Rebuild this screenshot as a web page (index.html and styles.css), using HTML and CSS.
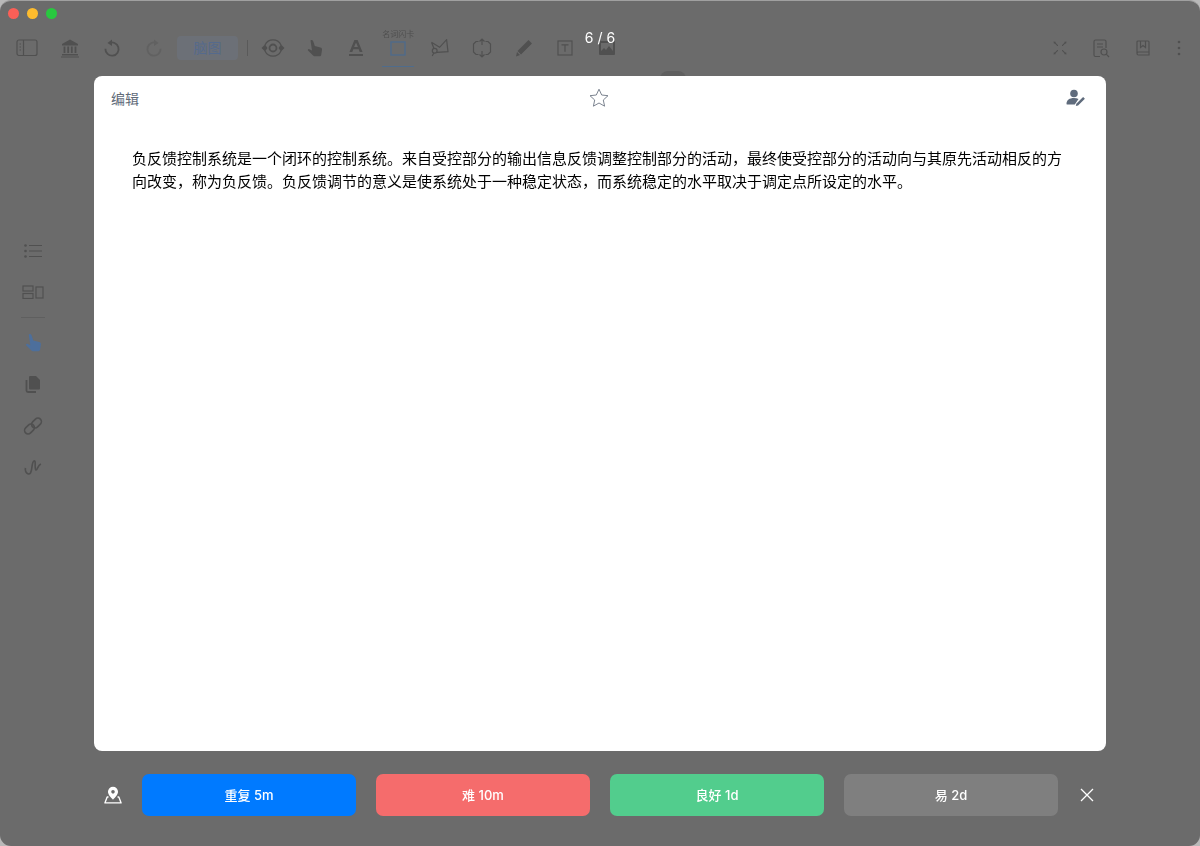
FILE: index.html
```html
<!DOCTYPE html>
<html>
  <head>
    <title>闪卡复习</title>
    <link rel="stylesheet" href="styles.css">
  </head>
  <body>
    <div class="window">
      <div class="titlebar">
        <span class="light red"></span>
        <span class="light yellow"></span>
        <span class="light green"></span>
      </div>

      <div class="toolbar">
        <div class="tool-group">
          <div class="tool tool-wide">
            <svg width="22" height="18" viewBox="0 0 22 18"><rect x="1" y="1" width="20" height="15.500" rx="2"/><path d="M7.500 1v15.500M3.500 5h1.500M3.500 8h1.500M3.500 11h1.500"/></svg>
          </div>
          <div class="tool tool-wide">
            <svg width="20" height="20" viewBox="0 0 20 20"><path class="solid" d="M10 1.500 18 6v1.500H2V6zM2 16h16v1.500H2zM1 18.500h18V19.500H1z"/><path class="thick" d="M4.500 8.500v6.500M8.200 8.500v6.500M11.800 8.500v6.500M15.500 8.500v6.500"/></svg>
          </div>
          <div class="tool">
            <svg width="18" height="18" viewBox="0 0 18 18"><path class="thick" d="M6 4.200a6.600 6.600 0 1 1-3.600 5.600"/><path class="solid" d="M9 0.500v6.500L4.500 4z"/></svg>
          </div>
          <div class="tool faint">
            <svg width="18" height="18" viewBox="0 0 18 18"><path class="thick" d="M12 4.200a6.600 6.600 0 1 0 3.600 5.600"/><path class="solid" d="M9 0.500v6.500L13.500 4z"/></svg>
          </div>
          <div class="mode-pill">脑图</div>
          <div class="tool-divider"></div>
          <div class="tool">
            <svg width="24" height="20" viewBox="0 0 24 20"><path d="M4 7a8.800 8.800 0 0 1 16 0M20 13a8.800 8.800 0 0 1-16 0"/><circle class="thick" cx="12" cy="10" r="3.500"/><path class="solid" d="M0.500 10 4 6.500 6.500 10 4 13.500zM23.500 10 20 6.500 17.500 10 20 13.500z"/></svg>
          </div>
          <div class="tool">
            <svg width="16" height="18" viewBox="0 0 16 18"><path class="solid" d="M3.500 1.500c1-1 2.400-.4 2.800 1L7.800 7l5.600 1.500c1.200.3 1.800 1.200 1.600 2.400l-.8 5c-.1.800-.8 1.300-1.500 1.300H7.500c-.6 0-1-.2-1.400-.7L1 11.500c-.5-.7.400-1.800 1.300-1.300L5 11.500z"/></svg>
          </div>
          <div class="tool">
            <svg width="16" height="18" viewBox="0 0 16 18"><path class="solid" d="M6.400 1h3.200L14.500 13h-2.800l-1-2.800H5.300L4.300 13H1.500zM6.100 8h3.800L8 3.400zM1 15h14v2H1z"/></svg>
          </div>
          <div class="tool card-tool">
            <span class="tool-label">名词闪卡</span>
            <svg width="16" height="15" viewBox="0 0 16 15"><rect class="blue" x="1" y="1" width="14" height="13"/></svg>
          </div>
          <div class="tool">
            <svg width="18" height="18" viewBox="0 0 18 18"><path d="M0.500 3.300 8.600 8.300 15.600 0.700 17 12.700 6 13.300M0.500 3.300 3 9.500"/><circle cx="3.700" cy="11.700" r="2.400"/><path d="M2.800 14 1.200 17"/></svg>
          </div>
          <div class="tool">
            <svg width="20" height="20" viewBox="0 0 20 20"><path d="M6.500 3.500H4L1.500 6v8L4 16.500h2.500M13.500 3.500H16L18.500 6v8L16 16.500h-2.500M10 1v6M7.500 3.500 10 1l2.500 2.500M10 13v6M7.500 16.500 10 19l2.500-2.500"/></svg>
          </div>
          <div class="tool">
            <svg width="18" height="18" viewBox="0 0 18 18"><path class="solid" d="M13.500 1 17 4.500 6 15.500 2.500 12zM2 13l3 3-4 1.500z"/></svg>
          </div>
          <div class="tool">
            <svg width="16" height="16" viewBox="0 0 16 16"><rect x="1" y="1" width="14" height="14"/><path d="M4.500 4.800h7M8 4.800v7"/></svg>
          </div>
          <div class="tool">
            <svg width="18" height="16" viewBox="0 0 18 16"><path class="solid" fill-rule="evenodd" d="M2 1h14a1 1 0 0 1 1 1v12a1 1 0 0 1-1 1H2a1 1 0 0 1-1-1V2a1 1 0 0 1 1-1zm1 10 3-3 2 2 3-4 4 5v-8H3z"/></svg>
          </div>
        </div>

        <div class="tool-group">
          <div class="tool tool-fullscreen">
            <svg width="16" height="16" viewBox="0 0 16 16"><path class="solid" d="M1.500 1.500 4 2 3.300 2.600 6 5.300 6 6 5.300 6 2.600 3.300 2 4zM14.500 1.500 12 2 12.700 2.600 10 5.300 10 6 10.700 6 13.400 3.300 14 4zM1.500 14.500 4 14 3.300 13.400 6 10.700 6 10 5.300 10 2.600 12.700 2 12zM14.500 14.500 12 14 12.700 13.400 10 10.700 10 10 10.700 10 13.400 12.700 14 12z"/></svg>
          </div>
          <div class="tool">
            <svg width="17" height="19" viewBox="0 0 17 19"><path d="M7 17.500H2.500a1.500 1.500 0 0 1-1.500-1.500V2.500A1.500 1.500 0 0 1 2.500 1h9A1.500 1.500 0 0 1 13 2.500V9M4 5h6M4 8h6"/><circle cx="11" cy="13" r="3"/><path d="M13.200 15.200 16 18"/></svg>
          </div>
          <div class="tool">
            <svg width="14" height="16" viewBox="0 0 14 16"><path d="M1 13V2a1 1 0 0 1 1-1h10a1 1 0 0 1 1 1v13H2.500A1.500 1.500 0 0 1 1 13.500 1.500 1.500 0 0 1 2.500 12H13"/><path d="M4.500 1v6.500L7 5.500l2.500 2V1"/></svg>
          </div>
          <div class="tool tool-more">
            <svg width="4" height="16" viewBox="0 0 4 16"><circle class="solid" cx="2" cy="2" r="1.300"/><circle class="solid" cx="2" cy="8" r="1.300"/><circle class="solid" cx="2" cy="14" r="1.300"/></svg>
          </div>
        </div>
      </div>

      <div class="sidebar">
        <div class="side-tool">
          <svg width="18" height="14" viewBox="0 0 18 14"><path d="M5 1.500h13M5 7h13M5 12.500h13"/><circle class="solid" cx="1.500" cy="1.500" r="1.300"/><circle class="solid" cx="1.500" cy="7" r="1.300"/><circle class="solid" cx="1.500" cy="12.500" r="1.300"/></svg>
        </div>
        <div class="side-tool">
          <svg width="22" height="14" viewBox="0 0 22 14"><rect x="1" y="1" width="10" height="5"/><rect x="1" y="8.500" width="10" height="5"/><rect x="14" y="2" width="7" height="11"/></svg>
        </div>
        <div class="side-divider"></div>
        <div class="side-tool">
          <svg width="17" height="19" viewBox="0 0 16 18"><path class="solid-blue" d="M3.500 1.500c1-1 2.400-.4 2.800 1L7.800 7l5.600 1.500c1.200.3 1.800 1.200 1.600 2.400l-.8 5c-.1.800-.8 1.300-1.500 1.300H7.500c-.6 0-1-.2-1.400-.7L1 11.500c-.5-.7.400-1.800 1.300-1.300L5 11.500z"/></svg>
        </div>
        <div class="side-tool">
          <svg width="16" height="18" viewBox="0 0 16 18"><path class="solid" d="M5 1h6l4 4v8.500a1 1 0 0 1-1 1H5a1 1 0 0 1-1-1v-11.500a1 1 0 0 1 1-1z"/><path class="thick" d="M1.500 5v10.500a1.500 1.500 0 0 0 1.500 1.500h8"/></svg>
        </div>
        <div class="side-tool">
          <svg width="20" height="20" viewBox="0 0 20 20"><rect class="link" x="1" y="9.500" width="11" height="7" rx="3.500" transform="rotate(-45 6.500 13)"/><rect class="link" x="8" y="3.500" width="11" height="7" rx="3.500" transform="rotate(-45 13.500 7)"/></svg>
        </div>
        <div class="side-tool">
          <svg width="18" height="18" viewBox="0 0 18 18"><path class="link" d="M1.500 10c-1 4 3 8 5 5 2-3 1-11 3.500-12 2.500-1 0 8 2 9 1.500.5 1.500-5 5-6"/></svg>
        </div>
      </div>

      <div class="back-tab"></div>

      <div class="review-layer">
        <div class="counter">6 / 6</div>
        <div class="card">
          <div class="card-head">
            <span class="edit-link">编辑</span>
            <svg class="star" width="20" height="19" viewBox="0 0 20 19"><path d="M10 1.200l2.700 5.800 6.300.7-4.700 4.300 1.300 6.200-5.600-3.200-5.600 3.200 1.300-6.200L1 7.700l6.300-.7z"/></svg>
            <svg class="person" width="20" height="18" viewBox="0 0 20 18"><circle cx="8" cy="4.500" r="3.800"/><path d="M0.500 15c0-4 3-6 7.500-6 1.800 0 3.300.3 4.500 1L8.800 15.500H1.500a1 1 0 0 1-1-.5z"/><path d="M14.800 10.200l2.300-2.300 1.800 1.800-6.800 6.800-2.300.5.500-2.300z"/></svg>
          </div>
          <p class="card-text">负反馈控制系统是一个闭环的控制系统。来自受控部分的输出信息反馈调整控制部分的活动，最终使受控部分的活动向与其原先活动相反的方向改变，称为负反馈。负反馈调节的意义是使系统处于一种稳定状态，而系统稳定的水平取决于调定点所设定的水平。</p>
        </div>
        <div class="answer-bar">
          <svg class="map-pin" width="18" height="18" viewBox="0 0 20 20"><path class="pin" fill-rule="evenodd" d="M10 .8a5.600 5.600 0 0 1 5.600 5.600c0 3-3.300 6.600-5.600 8.800-2.300-2.200-5.600-5.800-5.600-8.800A5.600 5.600 0 0 1 10 .8zm0 3.700a2 2 0 1 0 0 4 2 2 0 0 0 0-4z"/><path class="pin-base" d="M5 12.200H3.500L1 18.800h18l-2.500-6.600H15"/></svg>
          <button class="answer-btn btn-again">重复 5m</button>
          <button class="answer-btn btn-hard">难 10m</button>
          <button class="answer-btn btn-good">良好 1d</button>
          <button class="answer-btn btn-easy">易 2d</button>
          <svg class="close-x" width="14" height="14" viewBox="0 0 14 14"><path d="M1 1l12 12M13 1 1 13"/></svg>
        </div>
      </div>
    </div>
  </body>
</html>
```

FILE: styles.css
```css
html,
body {
  margin: 0;
  height: 100%;
  background: #b9b9b9;
}
body {
  font-family: "Liberation Sans", "Noto Sans CJK SC", sans-serif;
  overflow: hidden;
}
.window {
  position: relative;
  box-sizing: border-box;
  height: 846px;
  background: #6b6b6b;
  border-radius: 11px;
  border-top: 1px solid #a0a0a0;
  overflow: hidden;
}
.titlebar {
  display: flex;
  gap: 8px;
  padding: 7px 0 0 8px;
  height: 19px;
}
.light {
  width: 11px;
  height: 11px;
  border-radius: 50%;
}
.red {
  background: #fb5f57;
}
.yellow {
  background: #fdbc2e;
}
.green {
  background: #28c83f;
}

/* toolbar behind the dim layer */
.toolbar {
  display: flex;
  justify-content: space-between;
  height: 42px;
  padding: 0 0 0 5px;
  filter: blur(0.5px);
}
.tool-group {
  display: flex;
  align-items: center;
}
.tool {
  position: relative;
  display: flex;
  align-items: center;
  justify-content: center;
  width: 41.800px;
  height: 42px;
}
.tool-wide {
  width: 43px;
}
.faint {
  opacity: 0.35;
}
.mode-pill {
  width: 61px;
  height: 24px;
  margin-left: 2.400px;
  border-radius: 4px;
  background: #6c7077;
  color: #556a8c;
  font-size: 14px;
  line-height: 24px;
  text-align: center;
}
.tool-divider {
  width: 1px;
  height: 16px;
  margin: 0 4px 0 9px;
  background: #5a5a5a;
}
.card-tool::after {
  content: "";
  position: absolute;
  left: 5px;
  right: 5px;
  bottom: 2px;
  height: 1px;
  background: #4f6c8c;
}
.tool-label {
  position: absolute;
  top: 3px;
  left: 0;
  right: 0;
  color: #4f4f4f;
  font-size: 8px;
  line-height: 10px;
  text-align: center;
}
.tool-more {
  width: 30px;
  margin-right: 6px;
}
svg {
  fill: none;
  stroke: #505050;
  stroke-width: 1.2;
  display: block;
}
svg .solid {
  fill: #505050;
  stroke: none;
}
svg .solid-blue {
  fill: #4d6f9c;
  stroke: none;
}
svg .thick {
  stroke-width: 1.8;
}
svg .link {
  stroke-width: 1.6;
}
svg .blue {
  stroke: #4d6a8c;
  stroke-width: 1.3;
}

.sidebar {
  display: flex;
  flex-direction: column;
  align-items: center;
  width: 66px;
  padding-top: 161px;
  filter: blur(0.5px);
}
.side-tool {
  display: flex;
  align-items: center;
  justify-content: center;
  height: 41.500px;
  flex-shrink: 0;
}
.side-divider {
  width: 24px;
  height: 1px;
  margin: 4px 0;
  background: #5f5f5f;
}
.back-tab {
  position: absolute;
  top: 70px;
  left: 660px;
  width: 26px;
  height: 12px;
  border-radius: 8px 8px 0 0;
  background: #5f5f5f;
}

/* review layer */
.review-layer {
  position: absolute;
  inset: 0;
  display: flex;
  flex-direction: column;
  padding: 75px 94px 0;
}
.counter {
  position: absolute;
  top: 29px;
  left: 0;
  right: 0;
  color: #fff;
  font-family: Inter, "Noto Sans CJK SC", sans-serif;
  font-size: 14px;
  line-height: 16px;
  text-align: center;
}
.card {
  height: 675px;
  background: #fff;
  border-radius: 8px;
}
.card-head {
  display: grid;
  grid-template-columns: 1fr auto 1fr;
  align-items: center;
  height: 43px;
  padding: 0 20px 0 17px;
}
.edit-link {
  color: #606a78;
  font-size: 14px;
}
.star {
  stroke: #7c8490;
  stroke-width: 1;
}
.person {
  justify-self: end;
}
.person circle,
.person path {
  fill: #5f6b7c;
  stroke: none;
}
.card-text {
  margin: 28px 38px 0;
  color: #000;
  font-size: 15px;
  line-height: 23px;
}
.answer-bar {
  display: flex;
  align-items: center;
  gap: 20px;
  margin-top: 23px;
  margin-left: 10px;
}
.map-pin {
  flex-shrink: 0;
}
.map-pin .pin {
  fill: #fff;
  stroke: none;
}
.map-pin .pin-base {
  stroke: #fff;
  stroke-width: 1.5;
  stroke-linejoin: round;
}
.answer-btn {
  width: 214px;
  height: 42px;
  padding: 0 0 2px;
  border: none;
  border-radius: 7px;
  color: #fff;
  font-family: Inter, "Noto Sans CJK SC", sans-serif;
  font-size: 13px;
  font-weight: 500;
}
.btn-again {
  background: #007aff;
}
.btn-hard {
  background: #f56c6c;
}
.btn-good {
  background: #52cd8d;
}
.btn-easy {
  background: #7f7f7f;
}
.close-x {
  stroke: #fff;
  stroke-width: 1.3;
  flex-shrink: 0;
  margin-left: 2px;
}
```
